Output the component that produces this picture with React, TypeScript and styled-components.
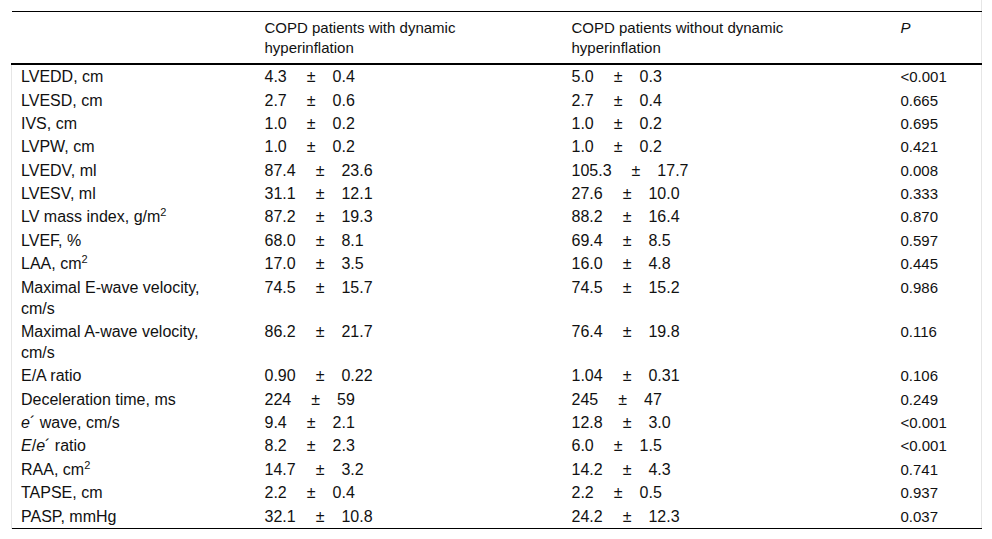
import React from "react";
import styled, { createGlobalStyle } from "styled-components";

const Global = createGlobalStyle`
  html, body { margin: 0; padding: 0; background: #fff; }
  body { font-family: "Liberation Sans", Arial, sans-serif; color: #111; }
`;

const Frame = styled.div`
  box-sizing: border-box;
  width: 982px;
  padding: 11px 0 0 11px;
  border-right: 1px solid #e6e6e6;
`;

const Table = styled.table`
  width: 970px;
  border-collapse: collapse;
  table-layout: fixed;
  font-size: 16px;
  border-top: 1px solid #000;
  border-bottom: 1px solid #000;
`;

const HeadRow = styled.tr`
  border-bottom: 2px solid #000;
`;

const HeadCell = styled.th<{ $wrapAt?: number }>`
  text-align: left;
  font-weight: normal;
  font-size: 15px;
  vertical-align: top;
  line-height: 20px;
  padding: 5.5px ${(p) => (p.$wrapAt ? `${p.$wrapAt}px` : "10px")} 5.5px 10px;
`;

const Row = styled.tr``;

const LabelCell = styled.td`
  vertical-align: top;
  line-height: 21px;
  padding: 1.2px 40px 1.2px 9px;
  border-left: 1px solid #e6e6e6;
`;

const Cell = styled.td<{ $small?: boolean }>`
  vertical-align: top;
  line-height: 21px;
  font-size: ${(p) => (p.$small ? "15px" : "16px")};
  padding: 1.2px 10px;
  white-space: nowrap;
`;

const MeanSd = styled.span`
  display: inline-flex;
`;

const Pm = styled.span`
  margin: 0 17px 0 20px;
`;

const Sup = styled.sup`
  font-size: 11px;
  line-height: 0;
  vertical-align: 6px;
`;

const Em = styled.i`
  font-style: italic;
`;

type RowData = {
  label: React.ReactNode;
  a: [string, string];
  b: [string, string];
  p: string;
};

const rows: RowData[] = [
  { label: "LVEDD, cm", a: ["4.3", "0.4"], b: ["5.0", "0.3"], p: "<0.001" },
  { label: "LVESD, cm", a: ["2.7", "0.6"], b: ["2.7", "0.4"], p: "0.665" },
  { label: "IVS, cm", a: ["1.0", "0.2"], b: ["1.0", "0.2"], p: "0.695" },
  { label: "LVPW, cm", a: ["1.0", "0.2"], b: ["1.0", "0.2"], p: "0.421" },
  { label: "LVEDV, ml", a: ["87.4", "23.6"], b: ["105.3", "17.7"], p: "0.008" },
  { label: "LVESV, ml", a: ["31.1", "12.1"], b: ["27.6", "10.0"], p: "0.333" },
  {
    label: (
      <>
        LV mass index, g/m<Sup>2</Sup>
      </>
    ),
    a: ["87.2", "19.3"],
    b: ["88.2", "16.4"],
    p: "0.870",
  },
  { label: "LVEF, %", a: ["68.0", "8.1"], b: ["69.4", "8.5"], p: "0.597" },
  {
    label: (
      <>
        LAA, cm<Sup>2</Sup>
      </>
    ),
    a: ["17.0", "3.5"],
    b: ["16.0", "4.8"],
    p: "0.445",
  },
  { label: "Maximal E-wave velocity, cm/s", a: ["74.5", "15.7"], b: ["74.5", "15.2"], p: "0.986" },
  { label: "Maximal A-wave velocity, cm/s", a: ["86.2", "21.7"], b: ["76.4", "19.8"], p: "0.116" },
  { label: "E/A ratio", a: ["0.90", "0.22"], b: ["1.04", "0.31"], p: "0.106" },
  { label: "Deceleration time, ms", a: ["224", "59"], b: ["245", "47"], p: "0.249" },
  {
    label: (
      <>
        <Em>e</Em>´ wave, cm/s
      </>
    ),
    a: ["9.4", "2.1"],
    b: ["12.8", "3.0"],
    p: "<0.001",
  },
  {
    label: (
      <>
        <Em>E</Em>/<Em>e</Em>´ ratio
      </>
    ),
    a: ["8.2", "2.3"],
    b: ["6.0", "1.5"],
    p: "<0.001",
  },
  {
    label: (
      <>
        RAA, cm<Sup>2</Sup>
      </>
    ),
    a: ["14.7", "3.2"],
    b: ["14.2", "4.3"],
    p: "0.741",
  },
  { label: "TAPSE, cm", a: ["2.2", "0.4"], b: ["2.2", "0.5"], p: "0.937" },
  { label: "PASP, mmHg", a: ["32.1", "10.8"], b: ["24.2", "12.3"], p: "0.037" },
];

const Value = ({ v }: { v: [string, string] }) => (
  <MeanSd>
    <span>{v[0]}</span>
    <Pm>±</Pm>
    <span>{v[1]}</span>
  </MeanSd>
);

export default function App() {
  return (
    <>
      <Global />
      <Frame>
        <Table>
          <colgroup>
            <col style={{ width: 243 }} />
            <col style={{ width: 307 }} />
            <col style={{ width: 329 }} />
            <col style={{ width: 91 }} />
          </colgroup>
          <thead>
            <HeadRow>
              <HeadCell />
              <HeadCell $wrapAt={60}>COPD patients with dynamic hyperinflation</HeadCell>
              <HeadCell $wrapAt={80}>COPD patients without dynamic hyperinflation</HeadCell>
              <HeadCell>
                <Em>P</Em>
              </HeadCell>
            </HeadRow>
          </thead>
          <tbody>
            {rows.map((r, i) => (
              <Row key={i}>
                <LabelCell>{r.label}</LabelCell>
                <Cell>
                  <Value v={r.a} />
                </Cell>
                <Cell>
                  <Value v={r.b} />
                </Cell>
                <Cell $small>{r.p}</Cell>
              </Row>
            ))}
          </tbody>
        </Table>
      </Frame>
    </>
  );
}
